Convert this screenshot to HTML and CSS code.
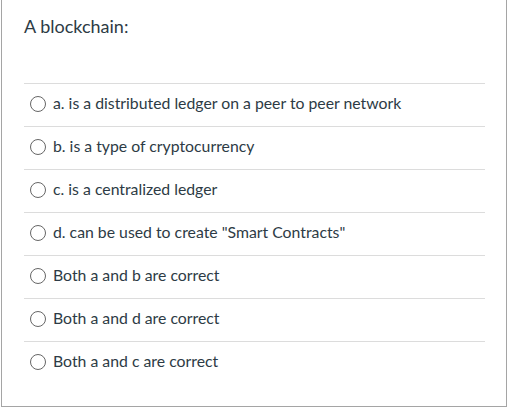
FILE: index.html
```
<!DOCTYPE html>
<html>
<head>
<meta charset="utf-8">
<link rel="stylesheet" href="styles.css">
</head>
<body>
<div class="quiz">
  <div class="question">A blockchain:</div>
  <ul class="answers">
    <li class="answer"><span class="radio"></span><span class="label">a. is a distributed ledger on a peer to peer network</span></li>
    <li class="answer"><span class="radio"></span><span class="label">b. is a type of cryptocurrency</span></li>
    <li class="answer"><span class="radio"></span><span class="label">c. is a centralized ledger</span></li>
    <li class="answer"><span class="radio"></span><span class="label">d. can be used to create "Smart Contracts"</span></li>
    <li class="answer"><span class="radio"></span><span class="label">Both a and b are correct</span></li>
    <li class="answer"><span class="radio"></span><span class="label">Both a and d are correct</span></li>
    <li class="answer"><span class="radio"></span><span class="label">Both a and c are correct</span></li>
  </ul>
</div>
</body>
</html>
```
FILE: styles.css
```
html, body {
  margin: 0;
  padding: 0;
  background: #fff;
}
body {
  font-family: Lato, "Open Sans", sans-serif;
  color: #2d3b45;
}
.quiz {
  margin-left: 1px;
  width: 461px;
  height: 406px;
  border: 1px solid #a5a5a5;
  border-top: none;
  padding: 0 21px 0 22px;
}
.question {
  font-size: 18px;
  line-height: 24px;
  padding-top: 14px;
  height: 69px;
}
.answers {
  list-style: none;
  margin: 0;
  padding: 0;
}
.answer {
  display: flex;
  align-items: center;
  box-sizing: border-box;
  height: 43px;
  padding-bottom: 6px;
  border-top: 1px solid #dcdcdc;
  font-size: 15.8px;
}
.radio {
  box-sizing: border-box;
  width: 16px;
  height: 16px;
  border: 1px solid #666;
  border-radius: 50%;
  margin-left: 6px;
  margin-right: 7px;
  margin-top: 3px;
  flex: none;
}
```
